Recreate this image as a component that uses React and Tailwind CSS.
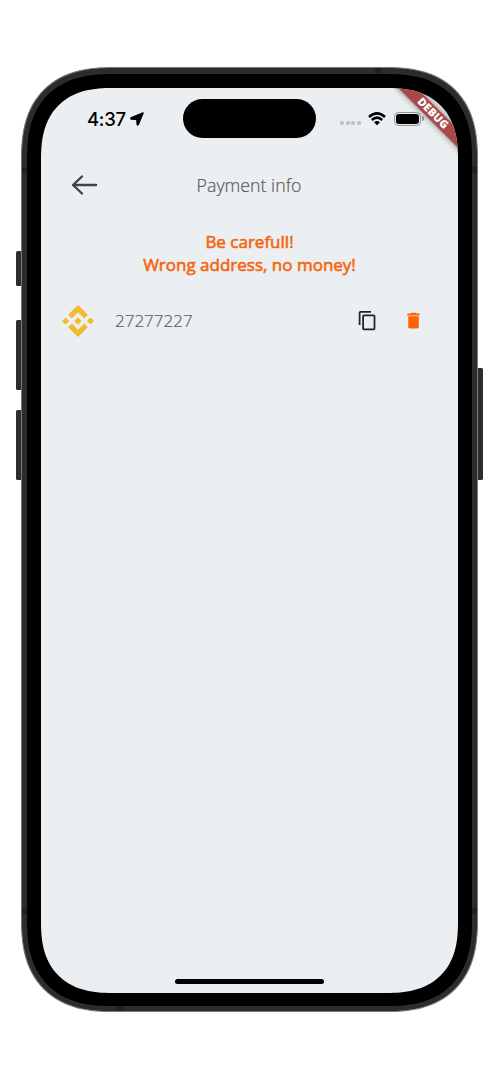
import React from "react";

function SideButton({ className }) {
  return <div className={`w-full bg-[#2b2d2e] ${className}`} />;
}

function StatusBar() {
  return (
    <div className="flex h-[62px] items-center pl-[46px]">
      <div className="flex w-[96px] items-center gap-[4px]">
        <span className="font-['Inter'] text-[18.5px] font-medium leading-[22px] tracking-[-0.3px] text-black">4:37</span>
        <svg className="h-[14px] w-[14px]" viewBox="0 0 14 14">
          <path d="M13.1.9 8.400 12.300Q7.700 13.700 7.100 12.100L6.900 7.500 1.400 7.100Q.2 6.400 1.400 5.700Z" fill="#000" stroke="#000" strokeWidth="1.4" strokeLinejoin="round" />
        </svg>
      </div>
      <div className="h-[39px] w-[133px] shrink-0 rounded-full bg-black" />
      <div className="ml-[24px] flex w-[85px] shrink-0 items-center">
        <div className="mt-[9px] flex gap-[1.700px]">
          {[0, 1, 2, 3].map((i) => (
            <i key={i} className="h-[4px] w-[4px] rounded-[1.5px] bg-[#c0c2c4]" />
          ))}
        </div>
        <svg className="ml-[7px] h-[14px] w-[18px]" viewBox="0 0 18 14" fill="none" stroke="#000">
          <path d="M1 5Q9-2.2 17 5" strokeWidth="2.6" />
          <path d="M3.8 8Q9 3.3 14.2 8" strokeWidth="2.5" />
          <path d="M9 13.300 6 10.3Q9 7.900 12 10.3Z" fill="#000" stroke="none" />
        </svg>
        <div className="ml-[8px] h-[14px] w-[27px] shrink-0 rounded-[4.5px] border border-[#929496] p-[1px]">
          <div className="h-full w-full rounded-[3px] bg-black" />
        </div>
        <i className="ml-[1px] h-[5px] w-[1.5px] shrink-0 rounded-r-full bg-[#929496]" />
      </div>
    </div>
  );
}

function DebugBanner() {
  return (
    <div className="absolute left-[339.500px] top-[19.2px] flex h-[12.7px] w-[104px] rotate-45 items-center justify-center bg-[#ab484a] shadow-[0_0_6px_rgba(0,0,0,0.5)]">
      <span className="text-[11px] font-extrabold leading-[12px] tracking-[0.2px] text-white">DEBUG</span>
    </div>
  );
}

function BinanceLogo() {
  return (
    <svg className="h-[32px] w-[32px]" viewBox="0 0 126.6 126.6" fill="#f3ba2f">
      <path d="M38.7 53.2 63.3 28.6l24.6 24.6 14.3-14.3L63.3 0 24.4 38.9zM0 63.3 14.3 49l14.3 14.3-14.3 14.3zM38.7 73.4 63.3 98l24.6-24.6 14.3 14.3-38.9 38.9-38.9-38.9zM98 63.3 112.3 49l14.3 14.3-14.3 14.3zM77.8 63.3 63.3 48.8 48.8 63.3l14.5 14.5z" />
    </svg>
  );
}

function Screen() {
  return (
    <div className="relative flex h-full w-full flex-col overflow-hidden rounded-[71px] bg-[#ebeff2] [corner-shape:superellipse(1.3)]">
      <StatusBar />
      <header className="flex h-[70px] items-center px-[30px]">
        <svg className="h-[22px] w-[28px]" viewBox="0 0 28 22" fill="none" stroke="#424345" strokeWidth="2.4" strokeLinecap="round" strokeLinejoin="round">
          <path d="M25 11H2.500M11 2.5 2 11 11 19.5" />
        </svg>
        <h1 className="flex-1 pr-[29px] text-center text-[17.800px] font-light leading-[24px] text-[#5a5b5d] [-webkit-text-stroke:0.2px_#5a5b5d]">Payment info</h1>
      </header>
      <p className="mt-[10px] text-center text-[17px] font-normal leading-[23.5px] text-[#f5660f] [-webkit-text-stroke:0.6px_#f5660f]">
        Be carefull!<br />Wrong address, no money!
      </p>
      <div className="mt-[28px] flex h-[32px] items-center pl-[20.500px] pr-[34px]">
        <BinanceLogo />
        <span className="ml-[21.500px] flex-1 text-[17px] font-light leading-[24px] text-[#5a5b5d] [-webkit-text-stroke:0.2px_#5a5b5d]">27277227</span>
        <svg className="h-[21px] w-[21px]" viewBox="0 0 24 24" fill="#202224">
          <path d="M16 1H4c-1.1 0-2 .9-2 2v14h2V3h12zm3 4H8c-1.1 0-2 .9-2 2v14c0 1.100.9 2 2 2h11c1.100 0 2-.9 2-2V7c0-1.100-.9-2-2-2m0 16H8V7h11z" />
        </svg>
        <svg className="ml-[25px] h-[21px] w-[21px]" viewBox="0 0 24 24" fill="#ff6200">
          <path d="M6 19c0 1.100.9 2 2 2h8c1.100 0 2-.9 2-2V7H6zM19 4h-3.500l-1-1h-5l-1 1H5v2h14z" />
          <path d="M5 6h14v1H5z" fillOpacity=".45" />
        </svg>
      </div>
      <div className="mx-auto mb-[9px] mt-auto h-[5px] w-[149px] rounded-full bg-black" />
      <DebugBanner />
    </div>
  );
}

export default function App() {
  return (
    <main className="flex h-[1080px] w-[498px] bg-white pl-[16px] pt-[67px] font-['Open_Sans',sans-serif]">
      <div className="flex w-[5px] flex-col pt-[184px]">
        <SideButton className="h-[35px] rounded-l-[1.5px]" />
        <SideButton className="mt-[34px] h-[70px] rounded-l-[1.5px]" />
        <SideButton className="mt-[20px] h-[70px] rounded-l-[1.5px]" />
      </div>
      <div className="relative h-[945px] w-[457px] rounded-[92px] border border-[#777879] bg-[#2c2c2c] p-[5px] py-[5.500px] [corner-shape:superellipse(1.3)]">
        <i className="absolute left-0 top-[99px] h-[6px] w-[5px] bg-[#202020]" />
        <i className="absolute right-0 top-[99px] h-[6px] w-[5px] bg-[#202020]" />
        <i className="absolute bottom-[97px] left-0 h-[6px] w-[5px] bg-[#202020]" />
        <i className="absolute bottom-[97px] right-0 h-[6px] w-[5px] bg-[#202020]" />
        <i className="absolute right-[96px] top-0 h-[5px] w-[6px] bg-[#202020]" />
        <i className="absolute bottom-0 left-[95px] h-[5px] w-[6px] bg-[#202020]" />
        <div className="h-full w-full rounded-[85px] bg-black pb-[13px] pl-[14px] pr-[14px] pt-[14px] [corner-shape:superellipse(1.3)]">
          <Screen />
        </div>
      </div>
      <div className="w-[5px] pt-[301px]">
        <SideButton className="h-[112px] rounded-r-[1.5px]" />
      </div>
    </main>
  );
}
